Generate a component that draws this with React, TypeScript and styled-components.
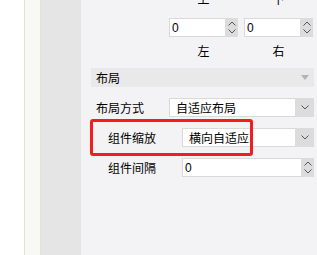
import React from "react";
import styled, { createGlobalStyle } from "styled-components";

const GlobalStyle = createGlobalStyle`
  html, body {
    margin: 0;
    padding: 0;
    height: 100%;
    overflow: hidden;
  }
  body {
    font-family: "Noto Sans CJK SC", "Noto Sans", sans-serif;
    font-size: 12px;
    color: #000;
  }
  #root {
    height: 100%;
  }
`;

const Page = styled.div`
  display: flex;
  height: 100vh;
  background: #fff;
`;

const Gutter = styled.div`
  width: 24px;
  background: #fff;
`;

const Strip = styled.div`
  width: 15px;
  background: #f8f8f5;
  border-left: 1px solid #e6e2cc;
  border-right: 1px solid #e6e2cc;
`;

const Rail = styled.div`
  width: 40px;
  background: #e5e5e5;
`;

const Panel = styled.div`
  position: relative;
  flex: 1;
  background: #f3f3f5;
  padding: 0 3px 0 10px;
  overflow: hidden;
`;

const PosGroup = styled.div`
  display: grid;
  grid-template-columns: 69px 69px;
  column-gap: 6px;
  margin: -8px 0 0 78px;
`;

const PosCell = styled.div`
  display: flex;
  flex-direction: column;
  align-items: center;
`;

const PosLabel = styled.div<{ $gap?: number }>`
  line-height: 14px;
  margin-top: ${(p) => p.$gap ?? 0}px;
`;

const SpinBox = styled.div<{ $gap?: number }>`
  display: flex;
  width: 100%;
  height: 19px;
  margin-top: ${(p) => p.$gap ?? 0}px;
  box-sizing: border-box;
`;

const SpinInput = styled.div`
  flex: 1;
  background: #fff;
  border: 1px solid #d9d9d9;
  border-right: none;
  display: flex;
  align-items: center;
  padding-left: 2px;
  font-family: "Liberation Sans", Arial, sans-serif;
  font-size: 12px;
`;

const SpinButtons = styled.div`
  width: 13px;
  background: #dcdcdc;
  display: flex;
  flex-direction: column;
  align-items: center;
  justify-content: center;
  gap: 3px;
`;

const SectionBar = styled.div`
  margin-top: 10px;
  height: 19px;
  background: #e9e9e9;
  display: flex;
  align-items: center;
  justify-content: space-between;
  padding: 0 5px 0 5px;
`;

const FormRow = styled.div<{ $labelWidth: number; $indent: number; $gap: number }>`
  display: grid;
  grid-template-columns: ${(p) => p.$labelWidth}px 1fr;
  align-items: center;
  margin-top: ${(p) => p.$gap}px;
  height: 19px;
  & > span {
    padding-left: ${(p) => p.$indent}px;
  }
`;

const Select = styled.div`
  display: flex;
  height: 19px;
`;

const SelectValue = styled.div`
  flex: 1;
  background: #fff;
  border: 1px solid #d9d9d9;
  border-right: none;
  display: flex;
  align-items: center;
  padding-left: 6px;
`;

const SelectButton = styled.div`
  width: 19px;
  background: #dcdcdc;
  display: flex;
  align-items: center;
  justify-content: center;
`;

const Highlight = styled.div`
  position: absolute;
  left: 9px;
  top: 119px;
  width: 163px;
  height: 37px;
  box-sizing: border-box;
  border: 3px solid #f41c1c;
  border-radius: 3px;
  pointer-events: none;
`;

const Chevron = ({ up = false, color = "#555" }: { up?: boolean; color?: string }) => (
  <svg width="8" height="5" viewBox="0 0 8 5">
    <path
      d={up ? "M0.5 4.5 L4 1 L7.5 4.5" : "M0.5 0.5 L4 4 L7.5 0.5"}
      fill="none"
      stroke={color}
      strokeWidth="1"
    />
  </svg>
);

const Spin = ({ value, gap }: { value: string; gap?: number }) => (
  <SpinBox $gap={gap}>
    <SpinInput>{value}</SpinInput>
    <SpinButtons>
      <Chevron up />
      <Chevron />
    </SpinButtons>
  </SpinBox>
);

const Dropdown = ({ value }: { value: string }) => (
  <Select>
    <SelectValue>{value}</SelectValue>
    <SelectButton>
      <Chevron />
    </SelectButton>
  </Select>
);

export default function App() {
  return (
    <>
      <GlobalStyle />
      <Page>
        <Gutter />
        <Strip />
        <Rail />
        <Panel>
          <PosGroup>
            <PosCell>
              <PosLabel>上</PosLabel>
              <Spin value="0" gap={12} />
              <PosLabel $gap={7}>左</PosLabel>
            </PosCell>
            <PosCell>
              <PosLabel>下</PosLabel>
              <Spin value="0" gap={12} />
              <PosLabel $gap={7}>右</PosLabel>
            </PosCell>
          </PosGroup>

          <SectionBar>
            <span>布局</span>
            <svg width="8" height="5" viewBox="0 0 8 5">
              <path d="M0 0 L8 0 L4 5 Z" fill="#b4b4b4" />
            </svg>
          </SectionBar>

          <FormRow $labelWidth={78} $indent={5} $gap={11}>
            <span>布局方式</span>
            <Dropdown value="自适应布局" />
          </FormRow>
          <FormRow $labelWidth={91} $indent={17} $gap={11}>
            <span>组件缩放</span>
            <Dropdown value="横向自适应" />
          </FormRow>
          <FormRow $labelWidth={91} $indent={17} $gap={11}>
            <span>组件间隔</span>
            <Spin value="0" />
          </FormRow>

          <Highlight />
        </Panel>
      </Page>
    </>
  );
}
